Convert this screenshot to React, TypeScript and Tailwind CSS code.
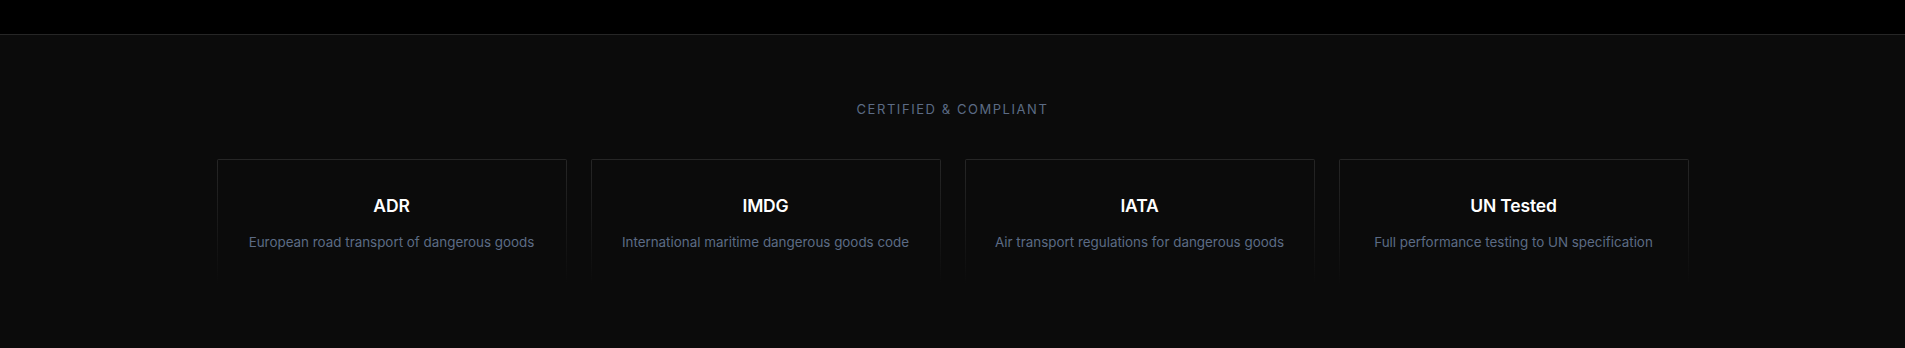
const certs = [
  { title: "ADR", text: "European road transport of dangerous goods" },
  { title: "IMDG", text: "International maritime dangerous goods code" },
  { title: "IATA", text: "Air transport regulations for dangerous goods" },
  { title: "UN Tested", text: "Full performance testing to UN specification" },
];

function CertCard({ title, text }: { title: string; text: string }) {
  return (
    <div className="rounded-[2px] bg-gradient-to-b from-[#262626] via-[#1a1a1a] to-transparent p-px pb-0">
      <div className="flex flex-col items-center bg-[#0b0b0b] px-4 pt-8 pb-8 text-center">
        <h3 className="mb-3 text-[17.5px] leading-7 font-semibold tracking-[-0.01em] text-white">{title}</h3>
        <p className="text-[13.4px] leading-5 whitespace-nowrap text-[#5c6b85]">{text}</p>
      </div>
    </div>
  );
}

export default function App() {
  return (
    <div className="bg-[#0b0b0b] font-['Inter',sans-serif]">
      <div className="h-[35px] border-b border-[#262626] bg-black" />
      <section className="py-16">
        <div className="mx-auto max-w-[1536px] px-8">
          <p className="mb-10 text-center text-[13px] leading-5 tracking-[0.12em] text-[#5c6b85] uppercase">
            Certified &amp; Compliant
          </p>
          <div className="grid grid-cols-4 gap-6">
            {certs.map((c) => (
              <CertCard key={c.title} title={c.title} text={c.text} />
            ))}
          </div>
        </div>
      </section>
    </div>
  );
}
